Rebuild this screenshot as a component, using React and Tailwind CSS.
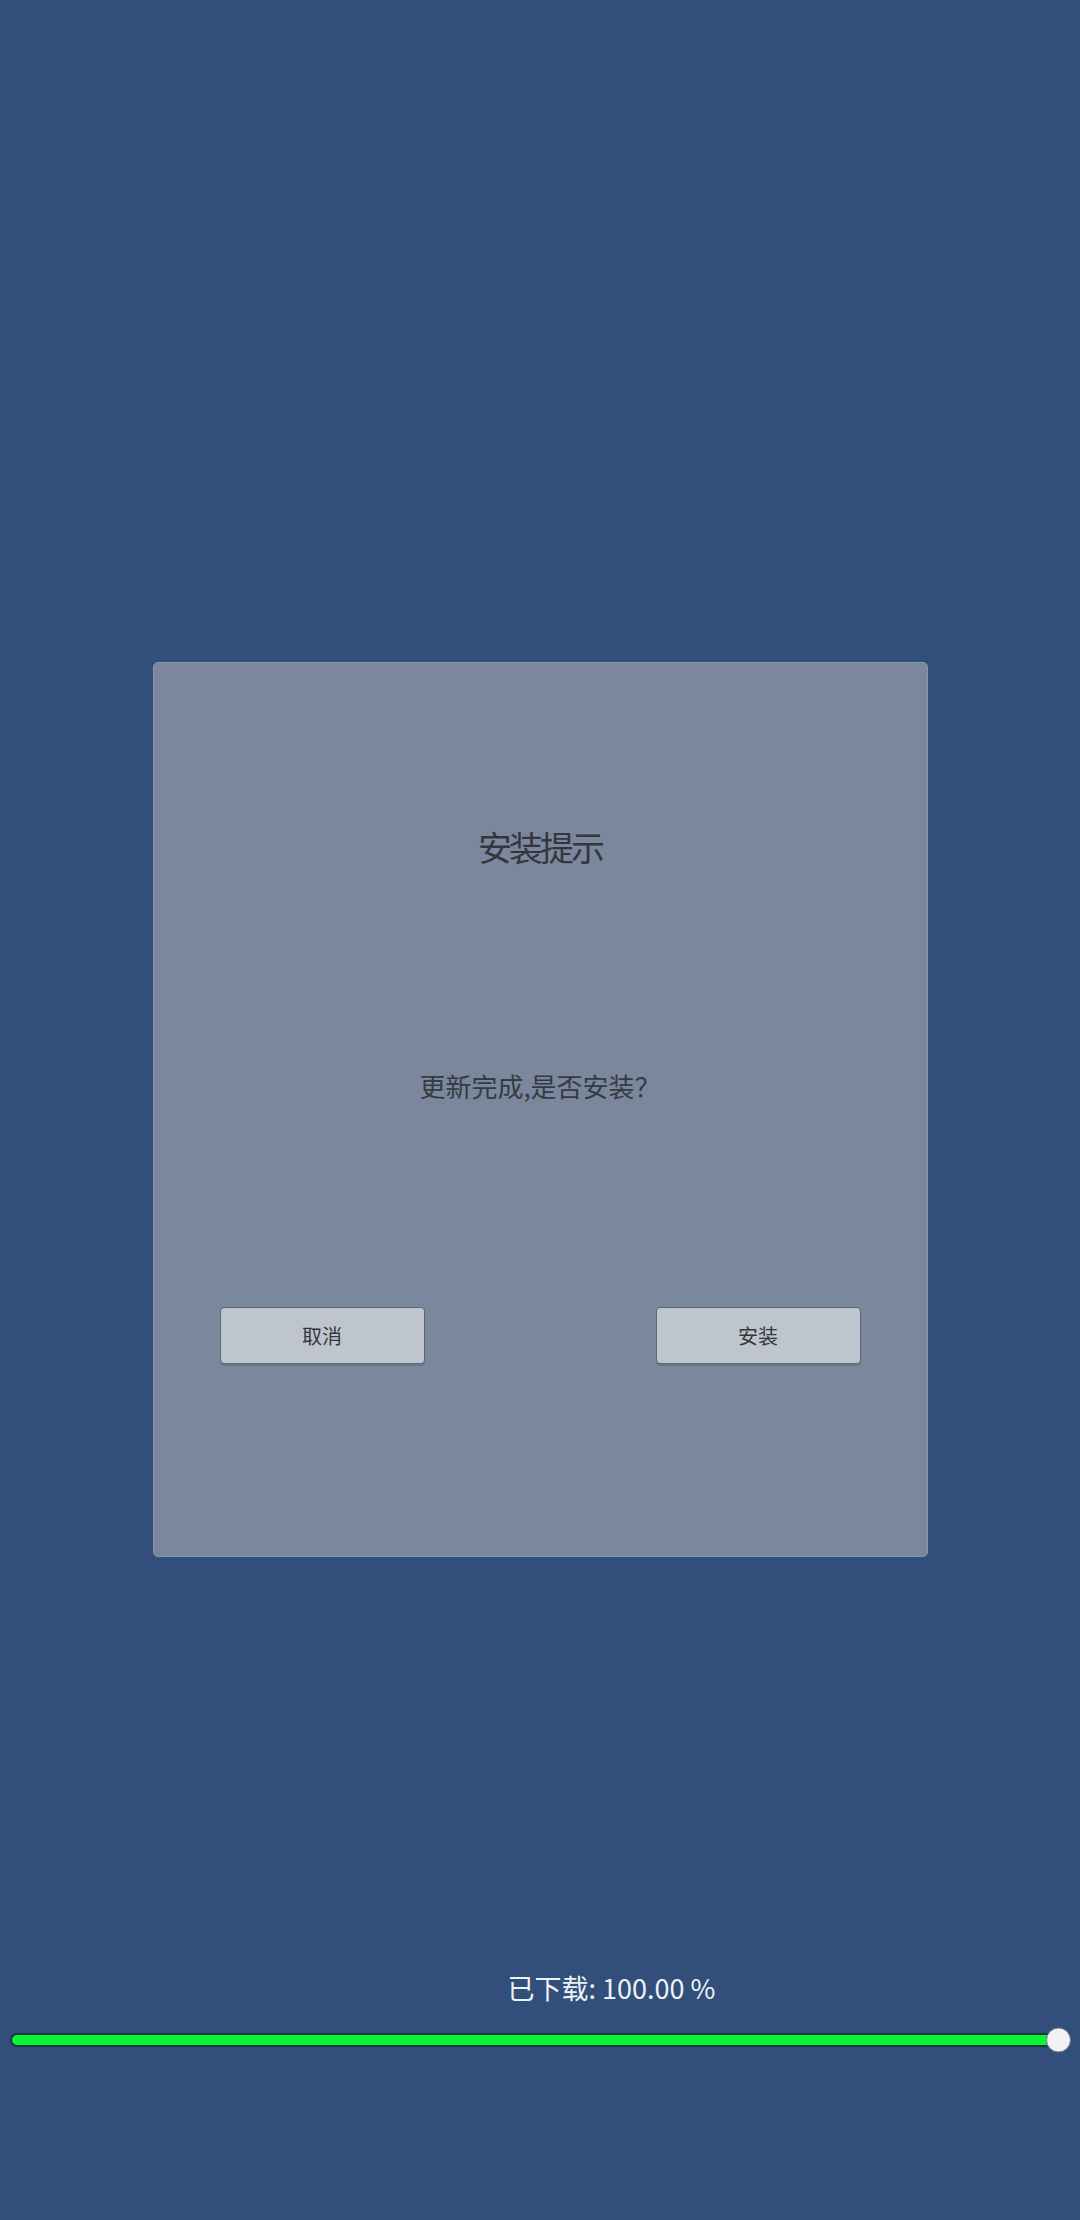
const Button = ({ label }) => {
  return (
    <button className="w-[205px] h-[57px] rounded-[4px] bg-[#bfc5cd] border border-[#5d6675] shadow-[0_2px_0_#6b7588] text-[20px] text-[#33373d] leading-none">
      {label}
    </button>
  );
};

const App = () => {
  const percent = 100;

  return (
    <div
      className="w-[1080px] h-[2220px] bg-[#324e7a] flex flex-col"
      style={{ fontFamily: '"Noto Sans CJK SC", "Noto Sans", sans-serif' }}
    >
      <div className="pt-[662px]">
        <div className="mx-auto w-[775px] h-[895px] bg-[#7b879c] rounded-[5px] border border-[#8a95a8] flex flex-col items-center">
          <h1 className="mt-[164px] text-[34px] leading-[40px] tracking-[-3px] text-[#33373d]">
            安装提示
          </h1>
          <p className="mt-[201px] text-[26px] leading-[36px] text-[#363b43]">
            更新完成,是否安装？
          </p>
          <div className="mt-[203px] w-full px-[66px] flex justify-between">
            <Button label="取消" />
            <Button label="安装" />
          </div>
        </div>
      </div>

      <div className="mt-[416px] pl-[143px] text-center text-[27px] leading-[30px] text-[#eef1f5]">
        已下载: {percent.toFixed(2)} %
      </div>

      <div className="mt-[30px] pl-[10px] pr-[21px] flex items-center">
        <div className="relative flex-1 h-[14px] rounded-full bg-[#1b3a40] p-[2px]">
          <div
            className="h-full rounded-full bg-[#0af53a]"
            style={{ width: `${percent}%` }}
          />
          <div className="absolute right-[-12px] top-1/2 -translate-y-1/2 w-[25px] h-[25px] rounded-full bg-[#f1f2f4] border border-[#6d7a90]" />
        </div>
      </div>
    </div>
  );
};

export default App;
